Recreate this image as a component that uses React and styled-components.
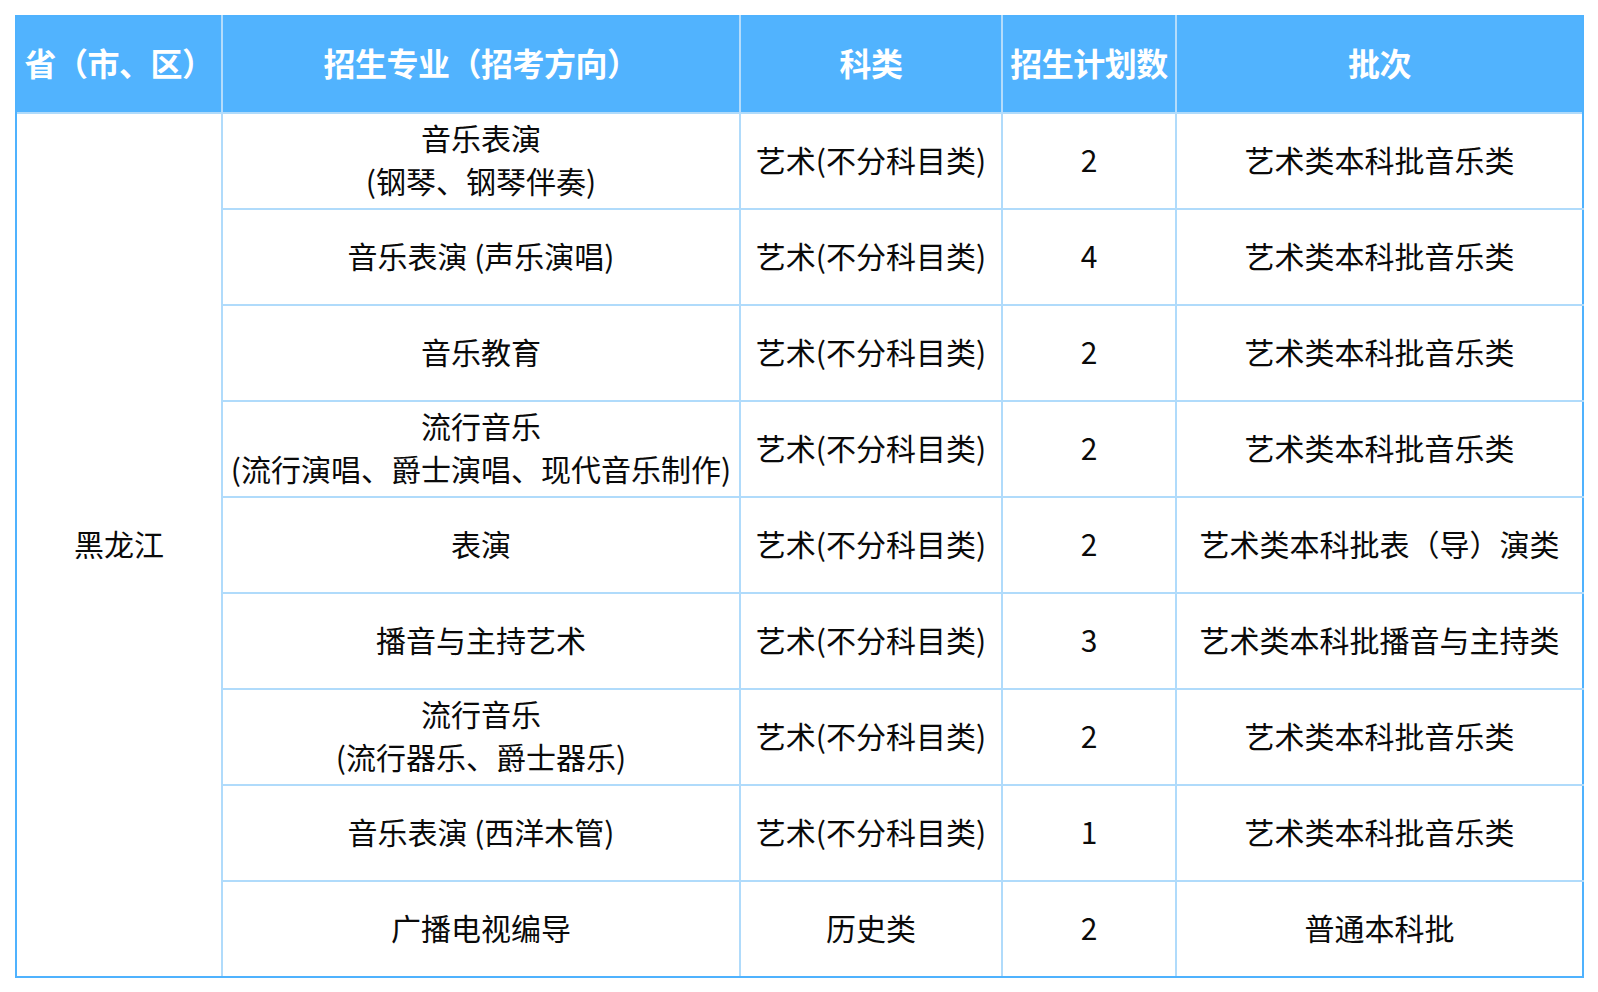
import React from 'react';
import styled, { createGlobalStyle } from 'styled-components';

const GlobalStyle = createGlobalStyle`
    body {
        margin: 0;
        background: #ffffff;
        font-family: "Noto Sans CJK SC", "Noto Sans", sans-serif;
    }
`;

const Page = styled.div`
    padding: 15px 16px 15px 15px;
`;

const Table = styled.table`
    width: 1567px;
    border-collapse: collapse;
    table-layout: fixed;
    border: 2px solid #4fb2fe;
`;

const HeadCell = styled.th`
    background-color: #51b3fe;
    color: #ffffff;
    font-size: 32px;
    font-weight: 700;
    height: 89px;
    padding: 0 0 6px;
    text-align: center;
    border-left: 2px solid #b4dcfb;
    white-space: nowrap;
    letter-spacing: -0.5px;

    &:first-child {
        border-left: none;
    }
`;

const Cell = styled.td`
    color: #0a0a0a;
    font-size: 30px;
    line-height: 43px;
    height: 90px;
    padding: 0 0 4px;
    text-align: center;
    vertical-align: middle;
    border: 2px solid #b0dbfb;
    white-space: nowrap;

    &:last-child {
        border-right-color: #4fb2fe;
    }

    tr:last-child > & {
        border-bottom-color: #4fb2fe;
    }
`;

const ProvinceCell = styled(Cell)`
    border-left-color: #4fb2fe;
    border-bottom-color: #4fb2fe;
`;

const Line = styled.div`
    display: block;
`;

const columns = [
    { title: '省（市、区）', width: 206 },
    { title: '招生专业（招考方向）', width: 518 },
    { title: '科类', width: 262 },
    { title: '招生计划数', width: 174 },
    { title: '批次', width: 407 },
];

const rows = [
    { major: ['音乐表演', '(钢琴、钢琴伴奏)'], type: '艺术(不分科目类)', count: 2, batch: '艺术类本科批音乐类' },
    { major: ['音乐表演 (声乐演唱)'], type: '艺术(不分科目类)', count: 4, batch: '艺术类本科批音乐类' },
    { major: ['音乐教育'], type: '艺术(不分科目类)', count: 2, batch: '艺术类本科批音乐类' },
    { major: ['流行音乐', '(流行演唱、爵士演唱、现代音乐制作)'], type: '艺术(不分科目类)', count: 2, batch: '艺术类本科批音乐类' },
    { major: ['表演'], type: '艺术(不分科目类)', count: 2, batch: '艺术类本科批表（导）演类' },
    { major: ['播音与主持艺术'], type: '艺术(不分科目类)', count: 3, batch: '艺术类本科批播音与主持类' },
    { major: ['流行音乐', '(流行器乐、爵士器乐)'], type: '艺术(不分科目类)', count: 2, batch: '艺术类本科批音乐类' },
    { major: ['音乐表演 (西洋木管)'], type: '艺术(不分科目类)', count: 1, batch: '艺术类本科批音乐类' },
    { major: ['广播电视编导'], type: '历史类', count: 2, batch: '普通本科批' },
];

const App = () => {
    return (
        <Page>
            <GlobalStyle />
            <Table>
                <colgroup>
                    {columns.map((c) => (
                        <col key={c.title} style={{ width: c.width }} />
                    ))}
                </colgroup>
                <thead>
                    <tr>
                        {columns.map((c) => (
                            <HeadCell key={c.title}>{c.title}</HeadCell>
                        ))}
                    </tr>
                </thead>
                <tbody>
                    {rows.map((r, i) => (
                        <tr key={i}>
                            {i === 0 && <ProvinceCell rowSpan={rows.length}>黑龙江</ProvinceCell>}
                            <Cell>
                                {r.major.map((m) => (
                                    <Line key={m}>{m}</Line>
                                ))}
                            </Cell>
                            <Cell>{r.type}</Cell>
                            <Cell>{r.count}</Cell>
                            <Cell>{r.batch}</Cell>
                        </tr>
                    ))}
                </tbody>
            </Table>
        </Page>
    );
};

export default App;
